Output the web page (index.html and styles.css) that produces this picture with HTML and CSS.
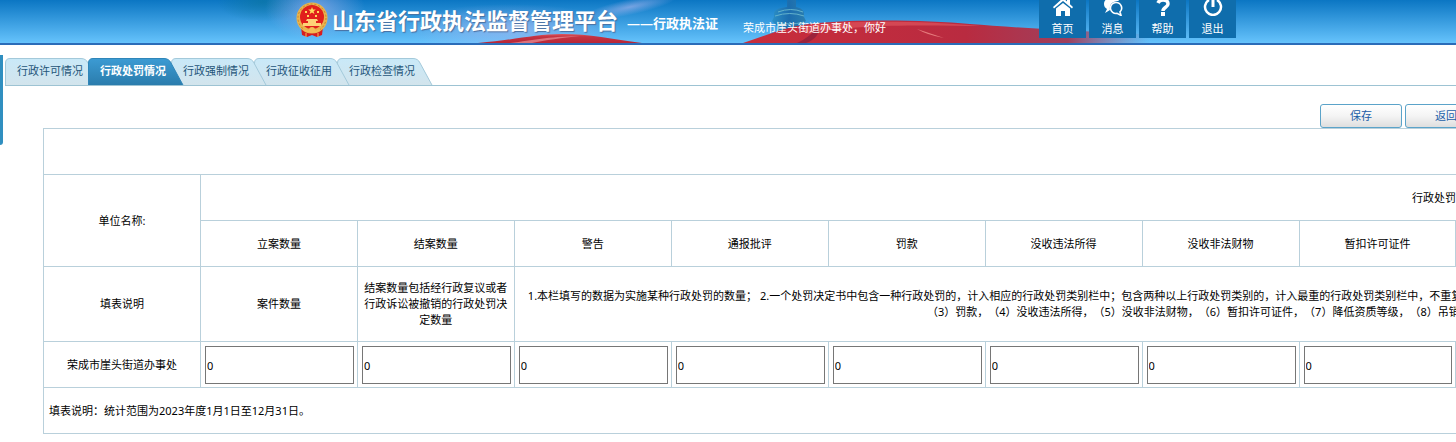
FILE: index.html
```html
<!DOCTYPE html>
<html lang="zh-CN">
  <head>
    <meta charset="utf-8">
    <meta name="viewport" content="width=device-width, initial-scale=1">
    <title>山东省行政执法监督管理平台</title>
    <link rel="stylesheet" href="styles.css">
  </head>
  <body>

    <header class="header">
      <svg class="banner" width="1240" height="43" viewBox="0 0 1240 43" aria-hidden="true">
        <defs>
          <linearGradient id="red" x1="0" y1="0" x2="0" y2="1">
            <stop offset="0" stop-color="#e0565c"/><stop offset=".3" stop-color="#c43442"/><stop offset="1" stop-color="#b92536"/>
          </linearGradient>
          <linearGradient id="redfade" x1="740" y1="0" x2="1150" y2="0" gradientUnits="userSpaceOnUse">
            <stop offset="0" stop-color="#c92d3b"/><stop offset=".55" stop-color="#b92b40"/>
            <stop offset=".8" stop-color="#a03f5c"/><stop offset="1" stop-color="#8e6d9c" stop-opacity="0"/>
          </linearGradient>
          <linearGradient id="tower" x1="0" y1="0" x2="1" y2="0">
            <stop offset="0" stop-color="#2b8fc6"/><stop offset=".5" stop-color="#1c6dae"/><stop offset="1" stop-color="#2a7fb0"/>
          </linearGradient>
          <radialGradient id="haze">
            <stop offset="0" stop-color="#b3b9f0" stop-opacity=".6"/><stop offset="1" stop-color="#b3b9f0" stop-opacity="0"/>
          </radialGradient>
          <radialGradient id="teal">
            <stop offset="0" stop-color="#0a749c" stop-opacity=".6"/><stop offset="1" stop-color="#0a749c" stop-opacity="0"/>
          </radialGradient>
        </defs>
        <ellipse cx="262" cy="2" rx="45" ry="20" fill="url(#teal)"/>
        <ellipse cx="315" cy="8" rx="50" ry="32" fill="url(#haze)"/>
        <ellipse cx="510" cy="28" rx="110" ry="24" fill="url(#haze)"/>
        <ellipse cx="630" cy="7" rx="48" ry="8" fill="url(#haze)" transform="rotate(-12 630 7)"/>
        <path d="M478 43C515 40 535 34 562 34C590 34 612 39 642 43Z" fill="url(#red)"/>
        <path d="M510 43C535 40 545 37 580 36C562 38 545 40 532 43Z" fill="#ea9298" opacity=".7"/>
        <path d="M787 0h9v7c5 1 8 3 8 7v3l2 4l-6 5v17h-23V26l-5-5l2-4v-3c0-4 4-6 13-7Z" fill="url(#tower)"/>
        <path d="M775 16q15-5 29 0M777 22q12 4 27 0M778 12q13-5 25 0" fill="none" stroke="#63b2cc" stroke-width="1"/>
        <path d="M743 43C765 36 790 25 818 23C860 19 930 20 970 24C1020 28 1090 32 1160 35V43Z" fill="url(#redfade)"/>
        <path d="M800 26C850 20 925 21 980 26C920 25 850 24 808 34Z" fill="#e25a62" opacity=".6"/>
        <path d="M806 43q14-5 13-17q-10 12-22 17Z" fill="#8c1f3c" opacity=".7"/>
        <path d="M917 29l27 9q-17-3-27-9Z" fill="#e57a7c"/>
      </svg>
      <div class="brand">
        <svg class="emblem" width="32" height="36" viewBox="0 0 32 36" aria-hidden="true">
          <path d="M5 25l1 8l5 2l5-2l5 2l5-2l1-8Z" fill="#d71d1f"/>
          <circle cx="16" cy="16" r="15.5" fill="#e9b44d"/>
          <circle cx="16" cy="16" r="14" fill="none" stroke="#c8812a" stroke-width="1" stroke-dasharray="2 2"/>
          <circle cx="16" cy="15" r="12" fill="#e11f1c"/>
          <path d="M16 5l1 2.600h2.800l-2.200 1.700l.8 2.700l-2.400-1.600l-2.400 1.600l.8-2.700l-2.200-1.700H15Z" fill="#ffd95c"/>
          <path d="M9 9h2v2H9zM21 9h2v2h-2zM11 13h2v2h-2zM19 13h2v2h-2z" fill="#ffd95c"/>
          <path d="M11 17h10l1 2H10zM12 19h8v2h-8zM7 21h18v3H7z" fill="#ffd276"/>
          <path d="M8 27q8 4 16 0v2q-8 4-16 0Z" fill="#f4bd55"/>
          <circle cx="16" cy="28" r="3" fill="#f4bd55"/>
          <path d="M10 31v4M22 31v4" stroke="#f4bd55"/>
        </svg>
        <h1 class="title">山东省行政执法监督管理平台</h1>
        <span class="subtitle">——行政执法证</span>
      </div>
      <span class="welcome">荣成市崖头街道办事处，你好</span>
      <nav class="menu">
        <a class="menu-item" href="#">
          <svg width="20" height="16" viewBox="0 2 20 16" aria-hidden="true"><path d="M10 0L0 9l1 1.500L10 3l9 7.500L20 9l-3-2.700V1h-3v2.500ZM3 10.500V18h5v-5h4v5h5v-7.500L10 5Z" fill="#fff"/></svg>
          首页
        </a>
        <a class="menu-item" href="#">
          <svg width="20" height="16" viewBox="0 2 20 16" aria-hidden="true"><path d="M8 0C3 0 1 3 1 6c0 2 1 4 3 5l-2 4l5-3c-1-6 3-9 9-9c-1-2-4-3-8-3Z" fill="#fff"/><path d="M13 4.500a5.500 5.500 0 1 0 1 10.900l4 2l-1-3.500A5.500 5.500 0 0 0 13 4.500Z" fill="none" stroke="#fff" stroke-width="1.600"/></svg>
          消息
        </a>
        <a class="menu-item" href="#">
          <svg width="20" height="16" viewBox="0 2 20 16" aria-hidden="true"><path d="M5 5C6 2.500 8 2 10 2c3 0 5 1.500 5 4c0 3.500-5 3-5 7" fill="none" stroke="#fff" stroke-width="3.500"/><path d="M8 14h4v4H8z" fill="#fff"/></svg>
          帮助
        </a>
        <a class="menu-item" href="#">
          <svg width="20" height="16" viewBox="0 2 20 16" aria-hidden="true"><path d="M6 2a8 8 0 1 0 8 0" fill="none" stroke="#fff" stroke-width="2.500"/><path d="M10 0v9" stroke="#fff" stroke-width="3"/></svg>
          退出
        </a>
      </nav>
    </header>

    <div class="side-handle"></div>

    <!-- shared outline of the tabs -->
    <svg class="defs" width="0" height="0" aria-hidden="true">
      <defs>
        <linearGradient id="tabfill" x1="0" y1="0" x2="0" y2="1"><stop offset="0" stop-color="#c9e9f8"/><stop offset="1" stop-color="#d3e4ec"/></linearGradient>
        <linearGradient id="tabon" x1="0" y1="0" x2="0" y2="1"><stop offset="0" stop-color="#3c9bd3"/><stop offset="1" stop-color="#2a7bab"/></linearGradient>
        <path id="tabshape" d="M.5 28V5Q.5 .5 5 .5H76Q81 .5 83 5L95.500 28"/>
      </defs>
    </svg>

    <nav class="tabs">
      <a class="tab" href="#"><svg class="tab-bg" width="96" height="27" aria-hidden="true"><use href="#tabshape"/></svg>行政许可情况</a>
      <a class="tab active" href="#"><svg class="tab-bg" width="96" height="27" aria-hidden="true"><use href="#tabshape"/></svg>行政处罚情况</a>
      <a class="tab" href="#"><svg class="tab-bg" width="96" height="27" aria-hidden="true"><use href="#tabshape"/></svg>行政强制情况</a>
      <a class="tab" href="#"><svg class="tab-bg" width="96" height="27" aria-hidden="true"><use href="#tabshape"/></svg>行政征收征用</a>
      <a class="tab" href="#"><svg class="tab-bg" width="96" height="27" aria-hidden="true"><use href="#tabshape"/></svg>行政检查情况</a>
    </nav>

    <form class="content">
      <div class="toolbar">
        <button type="button" class="btn">保存</button>
        <button type="button" class="btn">返回</button>
      </div>

      <table class="report">
        <tr><td colspan="17"></td></tr>
        <tr>
          <th rowspan="2">单位名称:</th>
          <th colspan="16">行政处罚实施情况</th>
        </tr>
        <tr>
          <th>立案数量</th>
          <th>结案数量</th>
          <th>警告</th>
          <th>通报批评</th>
          <th>罚款</th>
          <th>没收违法所得</th>
          <th>没收非法财物</th>
          <th>暂扣许可证件</th>
          <th>降低资质等级</th>
          <th>吊销许可证件</th>
          <th>限制开展生产经营活动</th>
          <th>责令停产停业</th>
          <th>责令关闭</th>
          <th>限制从业</th>
          <th>行政拘留</th>
          <th>其他行政处罚</th>
        </tr>
        <tr class="explain">
          <td>填表说明</td>
          <td>案件数量</td>
          <td>结案数量包括经行政复议或者行政诉讼被撤销的行政处罚决定数量</td>
          <td class="long" colspan="14">1.本栏填写的数据为实施某种行政处罚的数量； 2.一个处罚决定书中包含一种行政处罚的，计入相应的行政处罚类别栏中；包含两种以上行政处罚类别的，计入最重的行政处罚类别栏中，不重复统计。 3.行政处罚数量的统计范围包括适用简易程序和普通程序作出的行政处罚决定，不包括经行政复议或者行政诉讼被撤销的行政处罚决定； 4.行政处罚类别按照《中华人民共和国行政处罚法》的有关规定分别填写，包括：（1）警告，（2）通报批评，<br>（3）罚款，（4）没收违法所得，（5）没收非法财物，（6）暂扣许可证件，（7）降低资质等级，（8）吊销许可证件，（9）限制开展生产经营活动，（10）责令停产停业，（11）责令关闭，（12）限制从业，（13）行政拘留，（14）法律、行政法规规定的其他种类的行政处罚。</td>
        </tr>
        <tr class="values">
          <td>荣成市崖头街道办事处</td>
          <td><input type="text" value="0" aria-label="立案数量"></td>
          <td><input type="text" value="0" aria-label="结案数量"></td>
          <td><input type="text" value="0" aria-label="警告"></td>
          <td><input type="text" value="0" aria-label="通报批评"></td>
          <td><input type="text" value="0" aria-label="罚款"></td>
          <td><input type="text" value="0" aria-label="没收违法所得"></td>
          <td><input type="text" value="0" aria-label="没收非法财物"></td>
          <td><input type="text" value="0" aria-label="暂扣许可证件"></td>
          <td><input type="text" value="0" aria-label="降低资质等级"></td>
          <td><input type="text" value="0" aria-label="吊销许可证件"></td>
          <td><input type="text" value="0" aria-label="限制开展生产经营活动"></td>
          <td><input type="text" value="0" aria-label="责令停产停业"></td>
          <td><input type="text" value="0" aria-label="责令关闭"></td>
          <td><input type="text" value="0" aria-label="限制从业"></td>
          <td><input type="text" value="0" aria-label="行政拘留"></td>
          <td><input type="text" value="0" aria-label="其他行政处罚"></td>
        </tr>
        <tr><td class="note" colspan="17">填表说明：统计范围为2023年度1月1日至12月31日。</td></tr>
      </table>
    </form>

  </body>
</html>
```

FILE: styles.css
```css
body {
  margin: 0;
  font-family: "Noto Sans", "Noto Sans CJK SC", sans-serif;
  font-size: 11px;
  line-height: 16px;
  color: #000;
  background: #fff;
  overflow-x: hidden;
  text-spacing-trim: space-all;
}

a {
  text-decoration: none;
}

/* header */
.header {
  position: relative;
  display: flex;
  align-items: flex-start;
  height: 43px;
  padding-left: 296px;
  border-bottom: 2px solid #2b6cb8;
  background: linear-gradient(#0b76c3, #66c3fc);
  color: #fff;
  white-space: nowrap;
  overflow: hidden;
}

.banner {
  position: absolute;
  top: 0;
  left: 0;
}

.brand,
.welcome,
.menu {
  position: relative;
}

.brand {
  display: flex;
  align-items: center;
  width: 447px;
  height: 40px;
}

.title {
  margin: 0 9px 0 4px;
  font-size: 22px;
  line-height: 32px;
  font-weight: bold;
  text-shadow: 1px 1px 1px #4a6fa0;
}

.subtitle {
  padding-top: 6px;
  font-size: 13px;
  font-weight: bold;
}

.welcome {
  width: 296px;
  padding-top: 20px;
}

.menu {
  display: flex;
  gap: 3px;
}

.menu-item {
  display: flex;
  flex-direction: column;
  align-items: center;
  gap: 5px;
  width: 47px;
  height: 38px;
  color: #fff;
  background: #0f6dac;
}

.side-handle {
  position: absolute;
  top: 55px;
  left: 0;
  width: 3px;
  height: 90px;
  background: #308fc0;
  border-radius: 0 0 3px 0;
}

.defs {
  position: absolute;
}

/* tabs */
.tabs {
  display: flex;
  height: 27px;
  margin: 13px 0 0 5px;
  border-bottom: 1px solid #9dc3d3;
}

.tab {
  position: relative;
  width: 71px;
  padding-left: 12px;
  line-height: 26px;
  color: #1f5579;
  white-space: nowrap;
  isolation: isolate;
}

.tab-bg {
  position: absolute;
  top: 0;
  left: 0;
  z-index: -1;
  fill: url(#tabfill);
  stroke: #a3c9da;
}

/* each tab lies over the one on its right */
.tab:nth-child(3) {
  z-index: 3;
}

.tab:nth-child(4) {
  z-index: 2;
}

.tab.active {
  z-index: 4;
  color: #fff;
  font-weight: bold;
}

.active .tab-bg {
  fill: url(#tabon);
  stroke: #2f86b9;
}

/* content */
.content {
  padding: 18px 0 8px 43px;
  overflow: hidden;
}

.toolbar {
  display: flex;
  justify-content: flex-end;
  gap: 3px;
  margin-right: -31px;
}

.btn {
  width: 82px;
  height: 24px;
  padding: 0;
  border: 1px solid #5ba3c9;
  border-radius: 3px;
  background: linear-gradient(#fff, #f4f4f4 50%, #dedede);
  color: #1a5ea8;
  font: inherit;
}

.report {
  width: 2669px;
  table-layout: fixed;
  border-collapse: collapse;
}

.report th,
.report td {
  height: 46px;
  box-sizing: border-box;
  padding: 0 4px;
  border: 1px solid #b9d0db;
  font-weight: normal;
  text-align: center;
}

.report .explain td {
  height: 75px;
}

.report .long {
  white-space: nowrap;
}

.report .values td {
  padding: 4px 3px 3px 4px;
}

.report .values td:first-child {
  padding: 0 4px;
}

.report .note {
  padding-left: 5px;
  text-align: left;
}

.report input {
  display: block;
  box-sizing: border-box;
  width: 100%;
  height: 38px;
  padding: 0 1px;
  border: 1px solid #767676;
  font: inherit;
}
```
